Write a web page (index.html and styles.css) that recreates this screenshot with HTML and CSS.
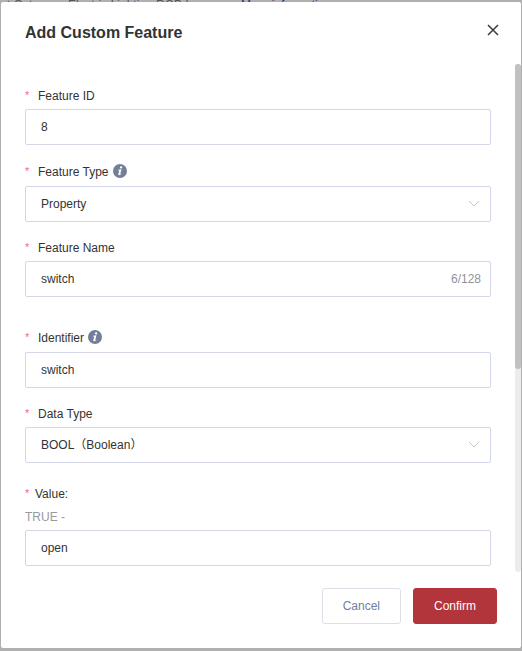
FILE: index.html
```html
<!DOCTYPE html>
<html lang="en">
<head>
  <meta charset="UTF-8">
  <meta name="viewport" content="width=device-width, initial-scale=1.0">
  <title>Add Custom Feature</title>
  <link rel="stylesheet" href="styles.css">
</head>
<body>
  <div class="page-info" aria-hidden="true">
    <span class="category">t Category:</span>
    <span class="category-name">Electric Lighting RGB Lamp</span>
    <a href="#" class="more" tabindex="-1">More information</a>
  </div>

  <div class="dialog" role="dialog" aria-labelledby="dialog-title">
    <div class="dialog-header">
      <h1 id="dialog-title">Add Custom Feature</h1>
      <button type="button" class="close" aria-label="Close">
        <svg width="12" height="12" viewBox="0 0 12 12" fill="none" stroke="#3a3a3f" stroke-width="1.5">
          <path d="M1 1l10 10M11 1L1 11"/>
        </svg>
      </button>
    </div>

    <div class="dialog-body">
      <form id="feature-form" class="feature-form">
        <div class="field">
          <label for="feature-id"><span class="required">*</span>Feature ID</label>
          <input type="text" id="feature-id" value="8">
        </div>

        <div class="field field-info">
          <label for="feature-type"><span class="required">*</span>Feature Type
            <svg class="info" width="14" height="14" viewBox="0 0 14 14">
              <circle cx="7" cy="7" r="7" fill="#747e99"/>
              <ellipse cx="8.1" cy="3.4" rx="1.2" ry="1.1" fill="#fff"/>
              <path d="M5.1 5.7L8.5 5.2L7.2 10L8.3 9.5L8.2 10.3Q5 12.2 5.3 10.2L6.3 6.4L5.1 6.4Z" fill="#fff"/>
            </svg>
          </label>
          <div class="control">
            <select id="feature-type">
              <option>Property</option>
            </select>
            <svg class="arrow" width="12" height="8" viewBox="0 0 12 8" fill="none" stroke="#c3c6cf">
              <path d="M1 1l5 5 5-5"/>
            </svg>
          </div>
        </div>

        <div class="field field-counted">
          <label for="feature-name"><span class="required">*</span>Feature Name</label>
          <div class="control">
            <input type="text" id="feature-name" value="switch" maxlength="128">
            <span class="count">6/128</span>
          </div>
        </div>

        <div class="field field-info">
          <label for="identifier"><span class="required">*</span>Identifier
            <svg class="info" width="14" height="14" viewBox="0 0 14 14">
              <circle cx="7" cy="7" r="7" fill="#747e99"/>
              <ellipse cx="8.1" cy="3.4" rx="1.2" ry="1.1" fill="#fff"/>
              <path d="M5.1 5.7L8.5 5.2L7.2 10L8.3 9.5L8.2 10.3Q5 12.2 5.3 10.2L6.3 6.4L5.1 6.4Z" fill="#fff"/>
            </svg>
          </label>
          <input type="text" id="identifier" value="switch">
        </div>

        <div class="field field-type">
          <label for="data-type"><span class="required">*</span>Data Type</label>
          <div class="control">
            <select id="data-type">
              <option>BOOL（Boolean）</option>
            </select>
            <svg class="arrow" width="12" height="8" viewBox="0 0 12 8" fill="none" stroke="#c3c6cf">
              <path d="M1 1l5 5 5-5"/>
            </svg>
          </div>
        </div>

        <div class="field field-value">
          <label for="value-true"><span class="required">*</span>Value:</label>
          <div class="hint">TRUE -</div>
          <input type="text" id="value-true" value="open">
        </div>
      </form>
      <div class="scrollbar"><div class="thumb"></div></div>
    </div>

    <div class="dialog-footer">
      <button type="button" class="btn">Cancel</button>
      <button type="submit" form="feature-form" class="btn btn-primary">Confirm</button>
    </div>
  </div>
</body>
</html>
```

FILE: styles.css
```css
* {
  box-sizing: border-box;
}

body {
  margin: 0;
  min-height: 100vh;
  background-color: #b0b0b0;
  color: #333333;
  font-family: "Liberation Sans", "Noto Sans CJK SC", sans-serif;
  font-size: 12px;
  overflow: hidden;
}

/* page under the dialog */
.page-info {
  display: flex;
  padding-left: 7px;
  line-height: 10px;
  color: #555555;
  white-space: nowrap;
}

.category {
  width: 61px;
}

.category-name {
  width: 173px;
}

.more {
  color: #35357a;
  text-decoration: none;
}

.dialog {
  position: absolute;
  top: 2px;
  left: 1px;
  right: 1px;
  background-color: #ffffff;
  border-radius: 2px;
}

.dialog-header {
  display: flex;
  justify-content: space-between;
  align-items: flex-start;
  padding: 18px 20px;
}

h1 {
  margin: 0;
  padding-left: 4px;
  font-size: 16px;
  line-height: 26px;
}

button {
  font-family: inherit;
  font-size: 12px;
  cursor: pointer;
}

.close {
  display: flex;
  padding: 4px 2px;
  border: none;
  background: none;
}

.dialog-body {
  display: flex;
}

.feature-form {
  flex: 1;
  padding: 19px 24px 6px;
}

.field {
  margin-bottom: 14px;
}

.field-info {
  margin-bottom: 13px;
}

.field-counted {
  margin-bottom: 28px;
}

.field-type {
  margin-bottom: 18px;
}

.field-value {
  margin-bottom: 0;
}

label {
  display: flex;
  align-items: center;
  height: 26px;
}

.field-info label {
  margin-bottom: 1px;
}

.required {
  width: 5px;
  margin-right: 8px;
  padding-bottom: 2px;
  color: #f56c6c;
  font-size: 11px;
}

.field-value .required {
  margin-right: 5px;
}

.info {
  margin-left: 4px;
  margin-bottom: 2px;
}

.hint {
  margin-bottom: 3px;
  line-height: 20px;
  color: #999999;
}

.control {
  position: relative;
}

input,
select {
  display: block;
  width: 100%;
  height: 36px;
  padding: 0 15px;
  border: 1px solid #d3d7e9;
  border-radius: 2px;
  background-color: #ffffff;
  color: #333333;
  font-family: inherit;
  font-size: 12px;
  appearance: none;
}

input:focus,
select:focus {
  border-color: #b2353b;
  outline: none;
}

.arrow {
  position: absolute;
  top: 14px;
  right: 11px;
  pointer-events: none;
}

.count {
  position: absolute;
  top: 0;
  right: 10px;
  line-height: 36px;
  color: #909399;
}

.scrollbar {
  width: 6px;
  border-radius: 3px;
  background-color: #ececec;
}

.thumb {
  height: 60%;
  border-radius: 3px;
  background-color: #c1c1c1;
}

.dialog-footer {
  display: flex;
  justify-content: flex-end;
  gap: 12px;
  padding: 16px 24px 24px;
}

.btn {
  height: 36px;
  padding: 0 20px;
  border: 1px solid #dcdfe6;
  border-radius: 3px;
  background-color: #ffffff;
  color: #747e99;
}

.btn-primary {
  border-color: #b2353b;
  background-color: #b2353b;
  color: #ffffff;
}
```
